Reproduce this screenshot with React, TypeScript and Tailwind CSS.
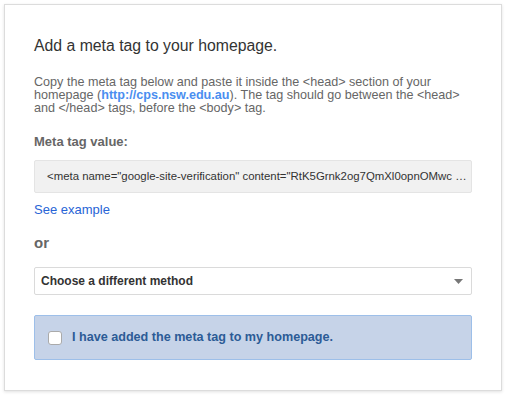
export default function App() {
  return (
    <div className="w-[506px] h-[395px] bg-white p-1 font-['Liberation_Sans',Arial,sans-serif]">
      <div className="h-[387px] w-[498px] border border-[#dcdcdc] shadow-[0_1px_3px_rgba(0,0,0,0.12)] bg-white pl-[29px] pr-[29px] pt-[31px]">
        <h1 className="text-[15.8px] leading-[20px] text-[#333]">Add a meta tag to your homepage.</h1>

        <p className="mt-[20px] text-[12.6px] leading-[13px] text-[#666] pr-[2px]">
          Copy the meta tag below and paste it inside the &lt;head&gt; section of your homepage (
          <a className="font-bold text-[#4a8ef0]">http://cps.nsw.edu.au</a>). The tag should go between the &lt;head&gt; and &lt;/head&gt; tags, before the &lt;body&gt; tag.
        </p>

        <div className="mt-[19px] text-[13px] leading-[16px] font-bold text-[#666]">Meta tag value:</div>

        <div className="mt-[10px] h-[33px] bg-[#f1f1f1] border border-[#e4e4e4] rounded-[2px] flex items-center pl-[12px] pr-[6px] text-[11.4px] text-[#333] whitespace-nowrap overflow-hidden">
          &lt;meta name="google-site-verification" content="RtK5Grnk2og7QmXl0opnOMwc …
        </div>

        <a className="block mt-[9px] text-[13px] leading-[16px] text-[#2864d6]">See example</a>

        <div className="mt-[16px] text-[15px] leading-[18px] font-bold text-[#666]">or</div>

        <div className="mt-[15px] h-[28px] bg-white border border-[#dadada] rounded-[2px] flex items-center justify-between pl-[6px] pr-[8px]">
          <span className="text-[12px] font-bold text-[#333]">Choose a different method</span>
          <svg width="9" height="5" viewBox="0 0 9 5">
            <path d="M0 0h9L4.5 5z" fill="#777" />
          </svg>
        </div>

        <div className="mt-[20px] h-[45px] bg-[#c6d3e8] border border-[#9dbfe9] rounded-[2px] flex items-center pl-[13px]">
          <span className="w-[14px] h-[14px] bg-white border border-[#aaa] rounded-[3px]" />
          <span className="ml-[10px] text-[12.6px] font-bold text-[#2c5b96]">I have added the meta tag to my homepage.</span>
        </div>
      </div>
    </div>
  );
}
